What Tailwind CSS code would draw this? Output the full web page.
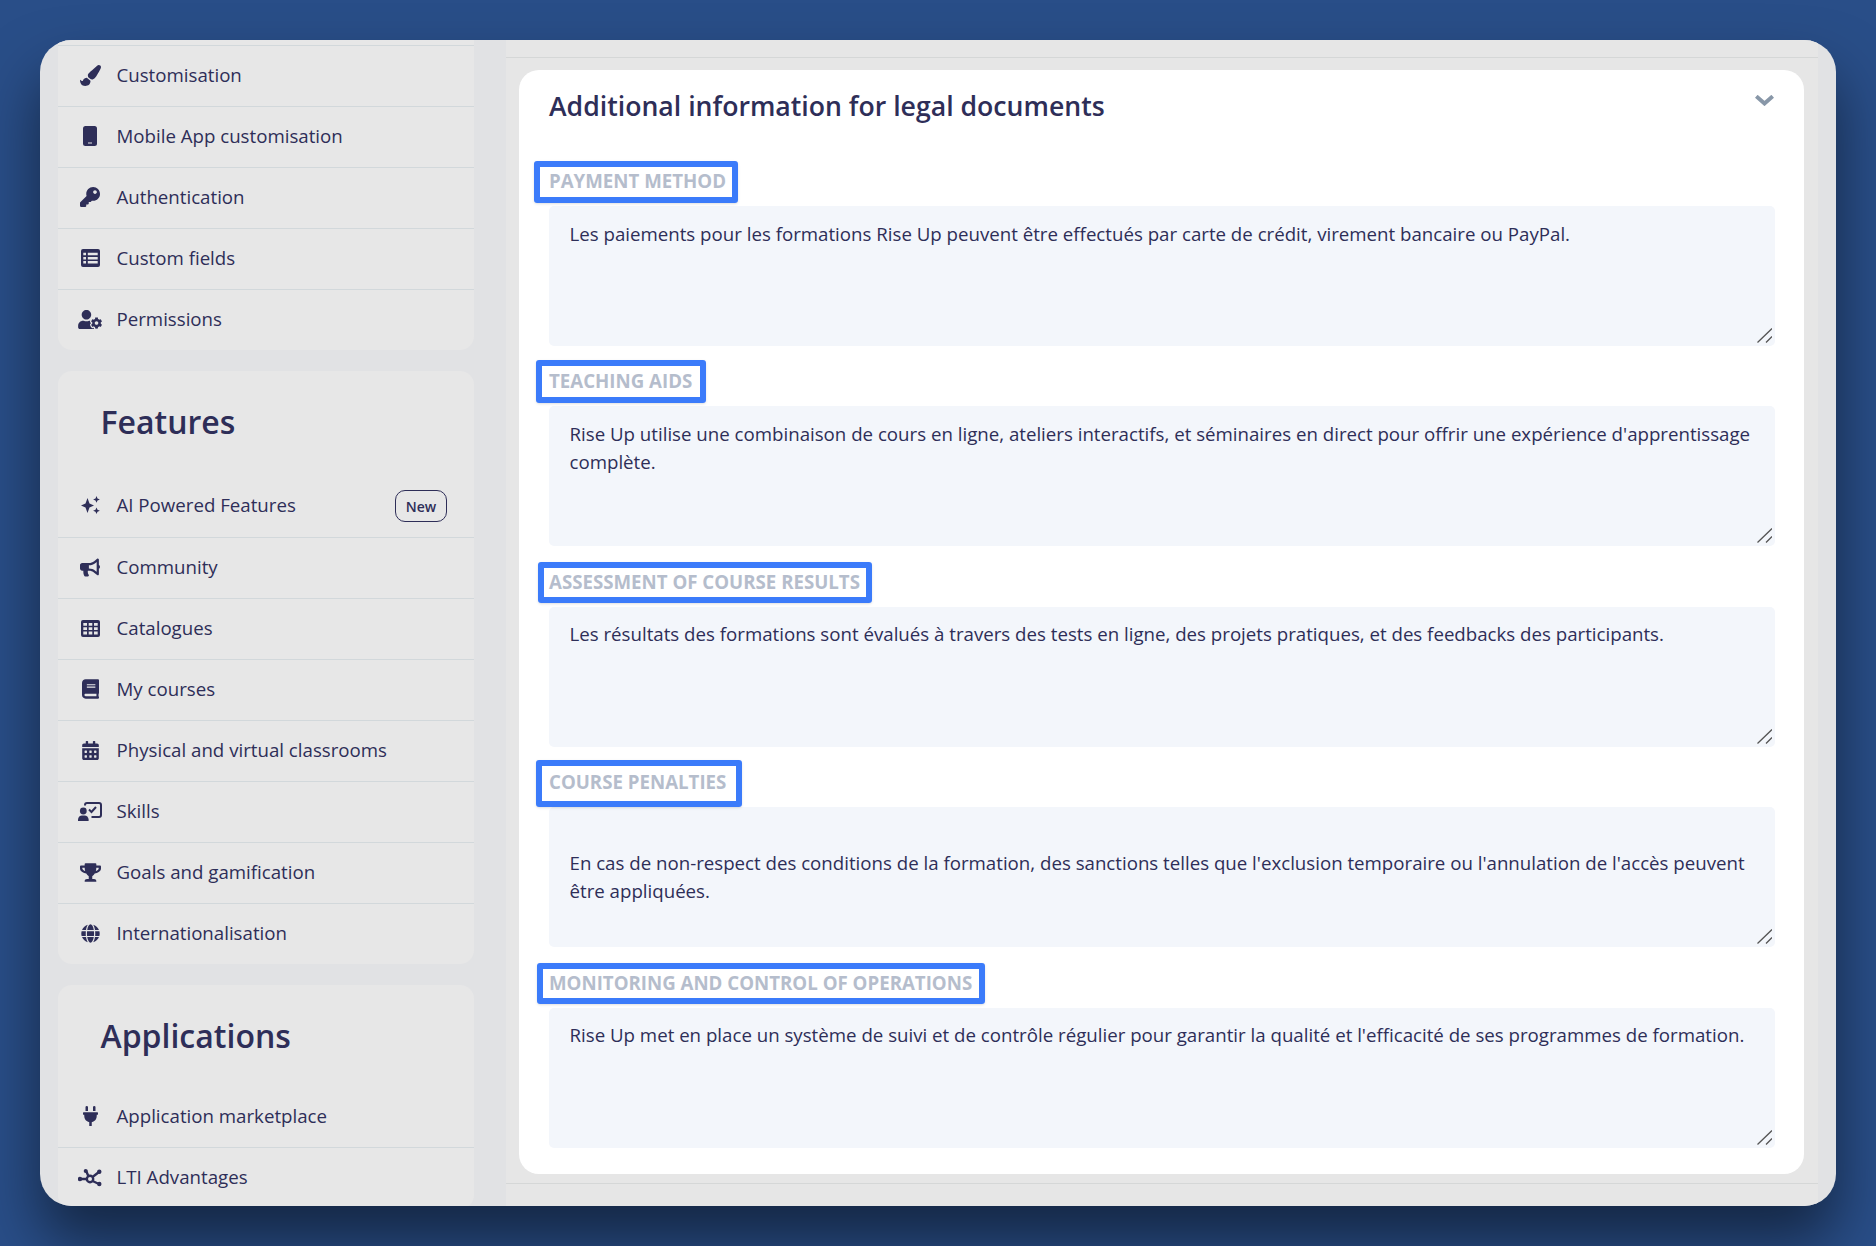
<!DOCTYPE html>
<html lang="en">
<head>
<meta charset="utf-8">
<title>Additional information for legal documents</title>
<script src="https://cdn.jsdelivr.net/npm/@tailwindcss/browser@4"></script>
</head>
<body class="h-[1246px] overflow-hidden bg-[#294e88] pt-[40px] pl-[40px] font-['Open_Sans',sans-serif] text-[#2e2e58]">
<div class="flex h-[1166px] w-[1796px] overflow-hidden rounded-[32px] bg-[#e1e2e4] shadow-[0_35px_60px_rgba(0,0,0,0.5)]">

    <!-- sidebar -->
    <aside class="flex w-[466px] shrink-0 flex-col gap-[21px] pl-[18px] text-[18.68px]">
        <div class="w-[416px] shrink-0 rounded-b-[14px] bg-[#e7e7e7] pt-[5px]">
            <a class="flex h-[61px] items-center gap-[9.5px] border-t border-[#d2d8db] pb-[2px] pl-[15px]">
                <span class="flex w-[34px] justify-center"><svg class="h-[21px] w-[21px] fill-current" viewBox="0 0 512 512"><path d="M167.02 309.34c-40.12 2.58-76.53 17.86-97.19 72.3-2.35 6.21-8 9.98-14.59 9.98-11.11 0-45.46-27.67-55.25-34.35C0 439.62 37.93 512 128 512c75.86 0 128-43.77 128-120.19 0-3.11-.65-6.08-.97-9.13l-88.01-73.34zM457.89 0c-15.16 0-29.37 6.71-40.21 16.45C213.27 199.05 192 203.34 192 257.09c0 13.7 3.25 26.76 8.73 38.7l63.82 53.18c7.21 1.8 14.64 3.03 22.39 3.03 62.11 0 98.11-45.47 211.16-256.46 7.38-14.35 13.9-29.85 13.9-45.99C512 20.64 486 0 457.89 0z"/></svg></span>
                Customisation
            </a>
            <a class="flex h-[61px] items-center gap-[9.5px] border-t border-[#d2d8db] pb-[2px] pl-[15px]">
                <span class="flex w-[34px] justify-center"><svg class="h-[20px] w-[14px]" viewBox="0 0 14 20"><rect width="14" height="20" rx="2.5" fill="currentColor"/><rect x="5" y="16.5" width="4" height="1" fill="#e7e7e7"/></svg></span>
                Mobile App customisation
            </a>
            <a class="flex h-[61px] items-center gap-[9.5px] border-t border-[#d2d8db] pb-[2px] pl-[15px]">
                <span class="flex w-[34px] justify-center"><svg class="h-[20px] w-[20px] fill-current" viewBox="0 0 512 512"><path d="M512 176.001C512 273.203 433.202 352 336 352c-11.22 0-22.19-1.062-32.827-3.069l-24.012 27.014A23.999 23.999 0 0 1 261.223 384H224v40c0 13.255-10.745 24-24 24h-40v40c0 13.255-10.745 24-24 24H24c-13.255 0-24-10.745-24-24v-78.059c0-6.365 2.529-12.47 7.029-16.971l161.802-161.802C163.108 213.814 160 195.271 160 176 160 78.798 238.797.001 335.999 0 433.488-.001 512 78.511 512 176.001zM336 128c0 26.51 21.49 48 48 48s48-21.49 48-48-21.49-48-48-48-48 21.49-48 48z"/></svg></span>
                Authentication
            </a>
            <a class="flex h-[61px] items-center gap-[9.5px] border-t border-[#d2d8db] pb-[2px] pl-[15px]">
                <span class="flex w-[34px] justify-center"><svg class="h-[18px] w-[19px]" viewBox="0 0 19 18"><path fill="currentColor" fill-rule="evenodd" d="M2 0h15a2 2 0 0 1 2 2v14a2 2 0 0 1-2 2H2a2 2 0 0 1-2-2V2a2 2 0 0 1 2-2zM2.300 3.800v2.500h2.700V3.800zM6.800 3.800v2.500h9.900V3.800zM2.300 7.900v2.500h2.700V7.900zM6.800 7.900v2.500h9.900V7.900zM2.300 12v2.500h2.700V12zM6.800 12v2.500h9.900V12z"/></svg></span>
                Custom fields
            </a>
            <a class="flex h-[61px] items-center gap-[9.5px] border-t border-[#d2d8db] pb-[2px] pl-[15px]">
                <span class="flex w-[34px] justify-center"><svg class="h-[19px] w-[24px] fill-current" viewBox="0 0 640 512"><path d="M610.5 373.3c2.6-14.1 2.6-28.5 0-42.6l25.8-14.9c3-1.7 4.3-5.2 3.3-8.5-6.7-21.6-18.2-41.2-33.2-57.4-2.3-2.5-6-3.1-9-1.4l-25.8 14.9c-10.9-9.3-23.4-16.5-36.9-21.3v-29.8c0-3.4-2.4-6.4-5.7-7.1-22.3-5-45-4.8-66.2 0-3.3.7-5.7 3.7-5.7 7.1v29.8c-13.5 4.8-26 12-36.9 21.3l-25.8-14.9c-2.9-1.7-6.7-1.1-9 1.4-15 16.2-26.5 35.8-33.2 57.4-1 3.3.4 6.8 3.3 8.5l25.8 14.9c-2.6 14.1-2.6 28.5 0 42.6l-25.8 14.9c-3 1.7-4.3 5.2-3.3 8.5 6.7 21.6 18.2 41.1 33.2 57.4 2.3 2.5 6 3.1 9 1.4l25.8-14.9c10.9 9.3 23.4 16.5 36.9 21.3v29.8c0 3.4 2.4 6.4 5.7 7.1 22.3 5 45 4.8 66.2 0 3.3-.7 5.7-3.7 5.7-7.1v-29.8c13.5-4.8 26-12 36.9-21.3l25.8 14.9c2.9 1.7 6.7 1.1 9-1.4 15-16.2 26.5-35.8 33.2-57.4 1-3.3-.4-6.8-3.3-8.5l-25.8-14.9zM496 400.5c-26.8 0-48.5-21.8-48.5-48.5s21.8-48.5 48.5-48.5 48.5 21.8 48.5 48.5-21.7 48.5-48.5 48.5zM224 256c70.7 0 128-57.3 128-128S294.7 0 224 0 96 57.3 96 128s57.3 128 128 128zm201.2 226.5c-2.3-1.2-4.6-2.6-6.8-3.9l-7.9 4.6c-6 3.4-12.8 5.3-19.6 5.3-10.9 0-21.4-4.6-28.9-12.6-18.3-19.8-32.3-43.9-40.2-69.6-5.5-17.7 1.9-36.4 17.9-45.7l7.9-4.6c-.1-2.6-.1-5.2 0-7.8l-7.9-4.6c-16-9.2-23.4-28-17.9-45.7.9-2.9 2.2-5.8 3.2-8.7-3.8-.3-7.5-1.2-11.4-1.2h-16.7c-22.2 10.2-46.9 16-72.9 16s-50.6-5.8-72.9-16h-16.7C60.2 288 0 348.2 0 422.4V464c0 26.5 21.5 48 48 48h352c10.1 0 19.5-3.2 27.2-8.5-1.2-3.8-2-7.7-2-11.8v-9.2z"/></svg></span>
                Permissions
            </a>
        </div>

        <div class="w-[416px] shrink-0 rounded-[14px] bg-[#e7e7e7]">
            <h2 class="flex h-[106px] items-center pb-[5px] pl-[42.5px] text-[32px] font-semibold">Features</h2>
            <a class="flex h-[61px] items-center gap-[9.5px] border-b border-[#d2d8db] pb-[4px] pl-[15px]">
                <span class="flex w-[34px] justify-center"><svg class="h-[18px] w-[19px] fill-current" viewBox="0 0 19 18"><path d="M6.500 2 8.500 7.500 13 9.500 8.500 11.500 6.500 17 4.500 11.500 0 9.500 4.500 7.500zM15.500 0l1 2.400 2.400 1-2.400 1-1 2.400-1-2.400-2.400-1 2.400-1zM15.500 11.500l1 2.300 2.400 1-2.400 1-1 2.200-1-2.200-2.400-1 2.400-1z"/></svg></span>
                AI Powered Features
                <span class="ml-auto mr-[27px] mt-[2px] flex h-[32px] w-[52px] items-center justify-center rounded-[10px] border-[1.5px] border-[#2e2e58] text-[14px] font-semibold">New</span>
            </a>
            <a class="flex h-[61px] items-center gap-[9.5px] border-b border-[#d2d8db] pb-[2px] pl-[15px]">
                <span class="flex w-[34px] justify-center"><svg class="h-[19px] w-[20px] fill-current" viewBox="0 0 576 512"><path d="M576 240c0-23.63-12.95-44.04-32-55.12V32.01C544 23.26 537.02 0 512 0c-7.12 0-14.19 2.38-19.98 7.02l-85.03 68.03C364.28 109.19 310.66 128 256 128H64c-35.35 0-64 28.65-64 64v96c0 35.35 28.65 64 64 64h33.7c-1.39 10.48-2.18 21.14-2.18 32 0 39.77 9.26 77.35 25.56 110.94 5.19 10.69 16.52 17.06 28.4 17.06h74.28c26.05 0 41.69-29.84 25.9-50.56-16.4-21.52-26.15-48.36-26.15-77.44 0-11.11 1.62-21.79 4.41-32H256c54.66 0 108.28 18.81 150.98 52.95l85.03 68.03a32.023 32.023 0 0 0 19.98 7.02c24.92 0 32-22.78 32-32V295.13C563.05 284.04 576 263.63 576 240zm-96 141.42l-33.05-26.44C392.95 311.78 325.12 288 256 288v-96c69.12 0 136.95-23.78 190.95-66.98L480 98.58v282.84z"/></svg></span>
                Community
            </a>
            <a class="flex h-[61px] items-center gap-[9.5px] border-b border-[#d2d8db] pb-[2px] pl-[15px]">
                <span class="flex w-[34px] justify-center"><svg class="h-[17px] w-[19px]" viewBox="0 0 19 17"><path fill="currentColor" fill-rule="evenodd" d="M2 0h15a2 2 0 0 1 2 2v13a2 2 0 0 1-2 2H2a2 2 0 0 1-2-2V2a2 2 0 0 1 2-2zM2.300 3v2.800h3.700V3zM7.700 3v2.800h3.600V3zM13 3v2.800h3.700V3zM2.300 7.300v2.800h3.700V7.300zM7.700 7.300v2.800h3.600V7.300zM13 7.300v2.800h3.700V7.300zM2.300 11.600v2.800h3.700v-2.800zM7.700 11.600v2.800h3.600v-2.800zM13 11.600v2.800h3.700v-2.800z"/></svg></span>
                Catalogues
            </a>
            <a class="flex h-[61px] items-center gap-[9.5px] border-b border-[#d2d8db] pb-[2px] pl-[15px]">
                <span class="flex w-[34px] justify-center"><svg class="h-[20px] w-[17px] fill-current" viewBox="0 0 448 512"><path d="M448 360V24c0-13.3-10.7-24-24-24H96C43 0 0 43 0 96v320c0 53 43 96 96 96h328c13.3 0 24-10.7 24-24v-16c0-7.5-3.5-14.3-8.9-18.7-4.2-15.4-4.2-59.3 0-74.7 5.4-4.3 8.9-11.1 8.9-18.6zM128 134c0-3.3 2.7-6 6-6h212c3.3 0 6 2.7 6 6v20c0 3.3-2.7 6-6 6H134c-3.3 0-6-2.7-6-6v-20zm0 64c0-3.3 2.7-6 6-6h212c3.3 0 6 2.7 6 6v20c0 3.3-2.7 6-6 6H134c-3.3 0-6-2.7-6-6v-20zm253.4 250H96c-17.7 0-32-14.3-32-32 0-17.6 14.4-32 32-32h285.4c-1.9 17.1-1.9 46.9 0 64z"/></svg></span>
                My courses
            </a>
            <a class="flex h-[61px] items-center gap-[9.5px] border-b border-[#d2d8db] pb-[2px] pl-[15px]">
                <span class="flex w-[34px] justify-center"><svg class="h-[19px] w-[17px] fill-current" viewBox="0 0 448 512"><path d="M0 464c0 26.5 21.5 48 48 48h352c26.5 0 48-21.5 48-48V192H0v272zm320-196c0-6.6 5.4-12 12-12h40c6.6 0 12 5.4 12 12v40c0 6.6-5.4 12-12 12h-40c-6.6 0-12-5.4-12-12v-40zm0 128c0-6.6 5.4-12 12-12h40c6.6 0 12 5.4 12 12v40c0 6.6-5.4 12-12 12h-40c-6.6 0-12-5.4-12-12v-40zM192 268c0-6.6 5.4-12 12-12h40c6.6 0 12 5.4 12 12v40c0 6.6-5.4 12-12 12h-40c-6.6 0-12-5.4-12-12v-40zm0 128c0-6.6 5.4-12 12-12h40c6.6 0 12 5.4 12 12v40c0 6.6-5.4 12-12 12h-40c-6.6 0-12-5.4-12-12v-40zM64 268c0-6.6 5.4-12 12-12h40c6.6 0 12 5.4 12 12v40c0 6.6-5.4 12-12 12H76c-6.6 0-12-5.4-12-12v-40zm0 128c0-6.6 5.4-12 12-12h40c6.6 0 12 5.4 12 12v40c0 6.6-5.4 12-12 12H76c-6.6 0-12-5.4-12-12v-40zM400 64h-48V16c0-8.8-7.2-16-16-16h-32c-8.8 0-16 7.2-16 16v48H160V16c0-8.8-7.2-16-16-16h-32c-8.8 0-16 7.2-16 16v48H48C21.5 64 0 85.5 0 112v48h448v-48c0-26.5-21.5-48-48-48z"/></svg></span>
                Physical and virtual classrooms
            </a>
            <a class="flex h-[61px] items-center gap-[9.5px] border-b border-[#d2d8db] pb-[2px] pl-[15px]">
                <span class="flex w-[34px] justify-center"><svg class="h-[19px] w-[24px]" viewBox="0 0 24 19"><path fill="none" stroke="currentColor" stroke-width="2" d="M7 3.500V3c0-1.200.8-2 2-2h12c1.200 0 2 .8 2 2v10c0 1.200-.8 2-2 2h-7.500"/><path fill="none" stroke="currentColor" stroke-width="2" d="M11 7.500l2.500 2.500L18 5"/><circle cx="5.300" cy="9" r="3.400" fill="currentColor"/><path fill="currentColor" d="M0 19v-1.500C0 15 2 13.400 4 13.400h2.600c2 0 4 1.600 4 4.100V19z"/></svg></span>
                Skills
            </a>
            <a class="flex h-[61px] items-center gap-[9.5px] border-b border-[#d2d8db] pb-[2px] pl-[15px]">
                <span class="flex w-[34px] justify-center"><svg class="h-[19px] w-[21px] fill-current" viewBox="0 0 576 512"><path d="M552 64H448V24c0-13.3-10.7-24-24-24H152c-13.3 0-24 10.7-24 24v40H24C10.7 64 0 74.7 0 88v56c0 35.7 22.5 72.4 61.9 100.7 31.5 22.7 69.8 37.1 110 41.7C203.3 338.5 240 360 240 360v72h-48c-35.3 0-64 20.7-64 56v12c0 6.6 5.4 12 12 12h296c6.6 0 12-5.4 12-12v-12c0-35.3-28.7-56-64-56h-48v-72s36.7-21.5 68.1-73.6c40.3-4.6 78.6-19 110-41.7 39.3-28.3 61.9-65 61.9-100.7V88c0-13.3-10.7-24-24-24zM99.3 192.8C74.9 175.2 64 155.6 64 144v-16h64.2c1 32.6 5.8 61.2 12.8 86.2-15.1-5.2-29.2-12.4-41.7-21.4zM512 144c0 16.1-17.7 36.1-35.3 48.8-12.5 9-26.7 16.2-41.8 21.4 7-25 11.8-53.6 12.8-86.2H512v16z"/></svg></span>
                Goals and gamification
            </a>
            <a class="flex h-[60px] items-center gap-[9.5px] pb-[2px] pl-[15px]">
                <span class="flex w-[34px] justify-center"><svg class="h-[19px] w-[19px] fill-current" viewBox="0 0 496 512"><path d="M336.5 160C322 70.7 287.8 8 248 8s-74 62.7-88.5 152h177zM152 256c0 22.2 1.2 43.5 3.3 64h185.3c2.1-20.5 3.3-41.8 3.3-64s-1.2-43.5-3.3-64H155.3c-2.1 20.5-3.3 41.8-3.3 64zm324.7-96c-28.6-67.9-86.5-120.4-158-141.6 24.4 33.8 41.2 84.7 50 141.6h108zM177.2 18.4C105.8 39.6 47.8 92.1 19.3 160h108c8.7-56.9 25.5-107.8 49.9-141.6zM487.4 192H372.7c2.1 21 3.3 42.5 3.3 64s-1.2 43-3.3 64h114.6c5.5-20.5 8.6-41.8 8.6-64s-3.1-43.5-8.5-64zM120 256c0-21.5 1.2-43 3.3-64H8.6C3.2 212.5 0 233.8 0 256s3.2 43.5 8.6 64h114.6c-2-21-3.2-42.5-3.2-64zm39.5 96c14.5 89.3 48.7 152 88.5 152s74-62.7 88.5-152h-177zm159.3 141.6c71.4-21.2 129.4-73.7 158-141.6h-108c-8.8 56.9-25.6 107.8-50 141.6zM19.3 352c28.6 67.9 86.5 120.4 158 141.6-24.4-33.8-41.2-84.7-50-141.6h-108z"/></svg></span>
                Internationalisation
            </a>
        </div>

        <div class="w-[416px] shrink-0 rounded-[14px] bg-[#e7e7e7]">
            <h2 class="flex h-[102px] items-center pb-[1px] pl-[42.5px] text-[32px] font-semibold">Applications</h2>
            <a class="flex h-[61px] items-center gap-[9.5px] border-b border-[#d2d8db] pb-[2px] pl-[15px]">
                <span class="flex w-[34px] justify-center"><svg class="h-[20px] w-[15px] fill-current" viewBox="0 0 384 512"><path d="M320,32a32,32,0,0,0-64,0v96h64Zm48,128H16A16,16,0,0,0,0,176v32a16,16,0,0,0,16,16H32v32A160.07,160.07,0,0,0,160,412.8V512h64V412.8A160.07,160.07,0,0,0,352,256V224h16a16,16,0,0,0,16-16V176A16,16,0,0,0,368,160ZM128,32a32,32,0,0,0-64,0v96h64Z"/></svg></span>
                Application marketplace
            </a>
            <a class="flex h-[61px] items-center gap-[9.5px] pb-[2px] pl-[15px]">
                <span class="flex w-[34px] justify-center"><svg class="h-[18px] w-[24px]" viewBox="0 0 24 18"><g stroke="currentColor" stroke-width="2.400" fill="none"><path d="M1.500 10h6.500M8 1.500l2.300 5.500M21 3l-6.500 5M21 15l-6.500-3"/><circle cx="12" cy="10" r="3.200"/></g><circle cx="2" cy="10" r="2.200" fill="currentColor"/><circle cx="21.300" cy="2.800" r="2.200" fill="currentColor"/><circle cx="21.300" cy="15" r="2.200" fill="currentColor"/><circle cx="7.700" cy="2" r="2" fill="currentColor"/></svg></span>
                LTI Advantages
            </a>
        </div>
    </aside>

    <!-- main -->
    <main class="flex h-full w-[1312px] shrink-0 flex-col bg-[#e6e6e6] pb-[23px]">
        <div class="h-[18px] shrink-0 border-b border-[#d5d7d7]"></div>
        <section class="ml-[13px] mt-[12px] mr-[14px] h-[1104px] shrink-0 rounded-[20px] bg-white pl-[30px] pr-[29px]">
            <div class="relative h-[75.6px] pt-[17px]">
                <h1 class="text-[26.65px] font-semibold leading-[38px]">Additional information for legal documents</h1>
                <svg class="absolute right-[1px] top-[25px] h-[11px] w-[19px]" viewBox="0 0 19 11" fill="none" stroke="#8897a8" stroke-width="4"><path d="M1.300 1.300 9.500 8.500l8.200-7.200"/></svg>
            </div>

            <div class="relative">
                <label class="block h-[60.4px] pt-[23.5px] text-[18.68px] font-bold uppercase leading-[24px] text-[#b5bdcc]">Payment method</label>
                <span class="absolute left-[-15px] top-[15.4px] h-[42px] w-[204px] rounded-[3px] border-[6px] border-[#3b7bfa] shadow-sm"></span>
                <textarea class="block h-[140px] w-full resize-none rounded-[5px] bg-[#f3f6fb] pt-[13.6px] pr-[21px] pb-[14px] pl-[20.5px] text-[18.68px] leading-[28px] outline-none">Les paiements pour les formations Rise Up peuvent être effectués par carte de crédit, virement bancaire ou PayPal.</textarea>
                <svg class="absolute bottom-[3px] right-[3px] h-[15px] w-[15px]" viewBox="0 0 15 15" fill="none" stroke="#555" stroke-width="1.300"><path d="M.5 14.500 15 .5M9 14.500 15 8.500"/></svg>
            </div>
            <div class="relative">
                <label class="block h-[60.4px] pt-[23.5px] text-[18.68px] font-bold uppercase leading-[24px] text-[#b5bdcc]">Teaching aids</label>
                <span class="absolute left-[-13px] top-[14px] h-[43px] w-[170px] rounded-[3px] border-[6px] border-[#3b7bfa] shadow-sm"></span>
                <textarea class="block h-[140px] w-full resize-none rounded-[5px] bg-[#f3f6fb] pt-[13.6px] pr-[21px] pb-[14px] pl-[20.5px] text-[18.68px] leading-[28px] outline-none">Rise Up utilise une combinaison de cours en ligne, ateliers interactifs, et séminaires en direct pour offrir une expérience d'apprentissage complète.</textarea>
                <svg class="absolute bottom-[3px] right-[3px] h-[15px] w-[15px]" viewBox="0 0 15 15" fill="none" stroke="#555" stroke-width="1.300"><path d="M.5 14.500 15 .5M9 14.500 15 8.500"/></svg>
            </div>
            <div class="relative">
                <label class="block h-[60.4px] pt-[23.5px] text-[18.68px] font-bold uppercase leading-[24px] text-[#b5bdcc]">Assessment of course results</label>
                <span class="absolute left-[-11px] top-[15.6px] h-[41px] w-[334px] rounded-[3px] border-[6px] border-[#3b7bfa] shadow-sm"></span>
                <textarea class="block h-[140px] w-full resize-none rounded-[5px] bg-[#f3f6fb] pt-[13.6px] pr-[21px] pb-[14px] pl-[20.5px] text-[18.68px] leading-[28px] outline-none">Les résultats des formations sont évalués à travers des tests en ligne, des projets pratiques, et des feedbacks des participants.</textarea>
                <svg class="absolute bottom-[3px] right-[3px] h-[15px] w-[15px]" viewBox="0 0 15 15" fill="none" stroke="#555" stroke-width="1.300"><path d="M.5 14.500 15 .5M9 14.500 15 8.500"/></svg>
            </div>
            <div class="relative">
                <label class="block h-[60.4px] pt-[23.5px] text-[18.68px] font-bold uppercase leading-[24px] text-[#b5bdcc]">Course penalties</label>
                <span class="absolute left-[-13px] top-[13.2px] h-[47px] w-[206px] rounded-[3px] border-[6px] border-[#3b7bfa] shadow-sm"></span>
                <textarea class="block h-[140px] w-full resize-none rounded-[5px] bg-[#f3f6fb] pt-[13.6px] pr-[21px] pb-[14px] pl-[20.5px] text-[18.68px] leading-[28px] outline-none">

En cas de non-respect des conditions de la formation, des sanctions telles que l'exclusion temporaire ou l'annulation de l'accès peuvent être appliquées.</textarea>
                <svg class="absolute bottom-[3px] right-[3px] h-[15px] w-[15px]" viewBox="0 0 15 15" fill="none" stroke="#555" stroke-width="1.300"><path d="M.5 14.500 15 .5M9 14.500 15 8.500"/></svg>
            </div>
            <div class="relative">
                <label class="block h-[60.4px] pt-[23.5px] text-[18.68px] font-bold uppercase leading-[24px] text-[#b5bdcc]">Monitoring and control of operations</label>
                <span class="absolute left-[-12px] top-[15.8px] h-[41px] w-[448px] rounded-[3px] border-[6px] border-[#3b7bfa] shadow-sm"></span>
                <textarea class="block h-[140px] w-full resize-none rounded-[5px] bg-[#f3f6fb] pt-[13.6px] pr-[21px] pb-[14px] pl-[20.5px] text-[18.68px] leading-[28px] outline-none">Rise Up met en place un système de suivi et de contrôle régulier pour garantir la qualité et l'efficacité de ses programmes de formation.</textarea>
                <svg class="absolute bottom-[3px] right-[3px] h-[15px] w-[15px]" viewBox="0 0 15 15" fill="none" stroke="#555" stroke-width="1.300"><path d="M.5 14.500 15 .5M9 14.500 15 8.500"/></svg>
            </div>
        </section>
        <div class="mt-[9px] flex-1 border-t border-[#d5d7d7]"></div>
    </main>
</div>
</body>
</html>
